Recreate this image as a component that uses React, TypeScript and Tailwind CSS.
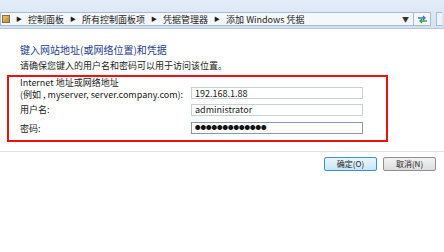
const font = "font-['Noto_Sans_CJK_SC','Noto_Sans',sans-serif]";

function Crumb({ children }: { children: React.ReactNode }) {
    return (
        <>
            <span className="mx-[6px] text-[6px] text-[#1e1e1e]">▶</span>
            <span>{children}</span>
        </>
    );
}

export default function App() {
    return (
        <div className={`w-[444px] h-[252px] overflow-hidden bg-white ${font}`}>
            {/* верхняя панель адреса */}
            <div className="h-[29px] bg-gradient-to-b from-[#e4edf8] to-[#d3e1f1] border-b border-[#b9c9dd] pt-[12px] pr-[2px] flex items-start gap-[5px]">
                <div className="flex-1 h-[14px] bg-[#f4f8fc] border border-[#aabbd3] flex items-center text-[9px] text-[#1a1a1a] leading-none">
                    <div className="ml-[1px] w-[8px] h-[8px] bg-gradient-to-br from-[#e7c873] to-[#b08a3a] border border-[#8d6e2a]" />
                    <Crumb>控制面板</Crumb>
                    <Crumb>所有控制面板项</Crumb>
                    <Crumb>凭据管理器</Crumb>
                    <Crumb>添加 Windows 凭据</Crumb>
                    <div className="ml-auto flex h-full items-center">
                        <span className="text-[7px] text-[#333] mr-[4px]">▼</span>
                        <div className="h-full w-[17px] border-l border-[#aabbd3] flex items-center justify-center">
                            <svg width="11" height="9" viewBox="0 0 11 9">
                                <path d="M1 3h7M6 1l2 2-2 2" stroke="#3a78c8" strokeWidth="1.3" fill="none" />
                                <path d="M10 6H3M5 4L3 6l2 2" stroke="#3aa04a" strokeWidth="1.3" fill="none" />
                            </svg>
                        </div>
                    </div>
                </div>
                <div className="w-[6px] h-[14px] border border-[#aabbd3] border-r-0 bg-[#eef3f9]" />
            </div>

            {/* содержимое */}
            <div className="pl-[20px] pt-[14px]">
                <h1 className="text-[10px] leading-[14px] text-[#1f3d8a]">键入网站地址(或网络位置)和凭据</h1>
                <p className="mt-[3px] text-[9px] leading-[12px] text-[#222]">请确保您键入的用户名和密码可以用于访问该位置。</p>
            </div>

            <div className="ml-[7px] mt-[3px] w-[381px] h-[67px] border-2 border-[#ee1111] pl-[11px] pr-[23px] text-[9px] text-[#1a1a1a]">
                <div className="flex items-start">
                    <div className="leading-[12px]">
                        <div>Internet 地址或网络地址</div>
                        <div>(例如 , myserver, server.company.com):</div>
                    </div>
                    <div className="ml-auto mt-[10px] w-[172px] h-[12px] border border-[#c8d0da] flex items-center pl-[3px] text-[9px] leading-none">192.168.1.88</div>
                </div>
                <div className="flex items-center mt-[2px]">
                    <span>用户名:</span>
                    <div className="ml-auto w-[172px] h-[12px] border border-[#c8d0da] flex items-center pl-[3px] text-[9px] leading-none">administrator</div>
                </div>
                <div className="flex items-center mt-[5px]">
                    <span>密码:</span>
                    <div className="ml-auto w-[172px] h-[12px] border border-[#8a9aae] flex items-center pl-[3px] text-[5.5px] leading-none text-[#111]">●●●●●●●●●●●●●</div>
                </div>
            </div>

            <div className="mt-[9px] border-t border-[#dcdfe3] pt-[5px] flex justify-end gap-[6px] pr-[8px]">
                <button type="button" className="w-[53px] h-[14px] rounded-[2px] border border-[#3c8fc8] bg-gradient-to-b from-[#eaf6fd] to-[#c8e6f8] text-[8px] leading-none text-[#222]">
                    确定(O)
                </button>
                <button type="button" className="w-[53px] h-[14px] rounded-[2px] border border-[#8e8f8f] bg-gradient-to-b from-[#f3f3f3] to-[#dcdcdc] text-[8px] leading-none text-[#222]">
                    取消(N)
                </button>
            </div>
        </div>
    );
}
